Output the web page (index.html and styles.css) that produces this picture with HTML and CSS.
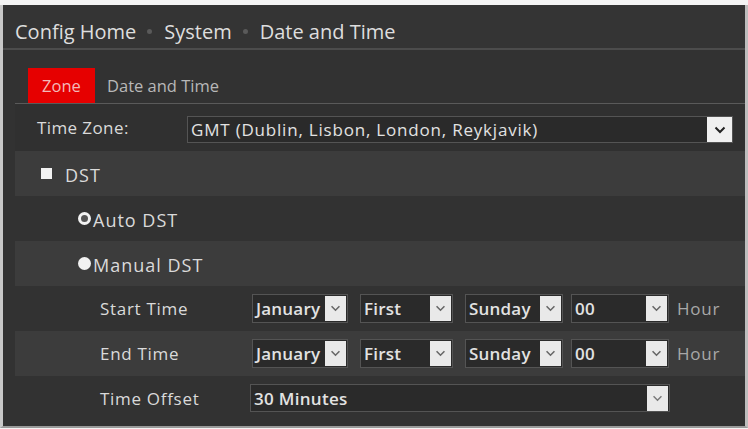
FILE: index.html
```html
<!DOCTYPE html>
<html>
<head>
<meta charset="utf-8">
<link rel="stylesheet" href="styles.css">
</head>
<body>
<div class="frame">
  <div class="header">
    <span>Config Home</span><span class="sep"></span><span>System</span><span class="sep"></span><span>Date and Time</span>
  </div>
  <div class="tabs">
    <div class="tab active">Zone</div>
    <div class="tab">Date and Time</div>
  </div>
  <div class="rows">
    <div class="row tz">
      <div class="label tzlabel">Time Zone:</div>
      <div class="select tzsel"><span class="val">GMT (Dublin, Lisbon, London, Reykjavik)</span><span class="btn"><svg viewBox="0 0 12 8" width="12" height="8"><path d="M1.5 1.5 L6 6 L10.5 1.5" fill="none" stroke="#222" stroke-width="2"/></svg></span></div>
    </div>
    <div class="row light dst">
      <span class="check"></span><span class="txt">DST</span>
    </div>
    <div class="row radio-row">
      <span class="radio on"></span><span class="txt">Auto DST</span>
    </div>
    <div class="row light radio-row">
      <span class="radio"></span><span class="txt">Manual DST</span>
    </div>
    <div class="row sub">
      <div class="label sublabel">Start Time</div>
      <div class="selgroup">
        <div class="select s-month"><span class="val">January</span><span class="btn sm"><svg viewBox="0 0 12 8" width="11" height="7"><path d="M1.5 1.5 L6 6 L10.5 1.5" fill="none" stroke="#666" stroke-width="1.8"/></svg></span></div>
        <div class="select s-week"><span class="val">First</span><span class="btn sm"><svg viewBox="0 0 12 8" width="11" height="7"><path d="M1.5 1.5 L6 6 L10.5 1.5" fill="none" stroke="#666" stroke-width="1.8"/></svg></span></div>
        <div class="select s-day"><span class="val">Sunday</span><span class="btn sm"><svg viewBox="0 0 12 8" width="11" height="7"><path d="M1.5 1.5 L6 6 L10.5 1.5" fill="none" stroke="#666" stroke-width="1.8"/></svg></span></div>
        <div class="select s-hour"><span class="val">00</span><span class="btn sm"><svg viewBox="0 0 12 8" width="11" height="7"><path d="M1.5 1.5 L6 6 L10.5 1.5" fill="none" stroke="#666" stroke-width="1.8"/></svg></span></div>
        <span class="unit">Hour</span>
      </div>
    </div>
    <div class="row light sub">
      <div class="label sublabel">End Time</div>
      <div class="selgroup">
        <div class="select s-month"><span class="val">January</span><span class="btn sm"><svg viewBox="0 0 12 8" width="11" height="7"><path d="M1.5 1.5 L6 6 L10.5 1.5" fill="none" stroke="#666" stroke-width="1.8"/></svg></span></div>
        <div class="select s-week"><span class="val">First</span><span class="btn sm"><svg viewBox="0 0 12 8" width="11" height="7"><path d="M1.5 1.5 L6 6 L10.5 1.5" fill="none" stroke="#666" stroke-width="1.8"/></svg></span></div>
        <div class="select s-day"><span class="val">Sunday</span><span class="btn sm"><svg viewBox="0 0 12 8" width="11" height="7"><path d="M1.5 1.5 L6 6 L10.5 1.5" fill="none" stroke="#666" stroke-width="1.8"/></svg></span></div>
        <div class="select s-hour"><span class="val">00</span><span class="btn sm"><svg viewBox="0 0 12 8" width="11" height="7"><path d="M1.5 1.5 L6 6 L10.5 1.5" fill="none" stroke="#666" stroke-width="1.8"/></svg></span></div>
        <span class="unit">Hour</span>
      </div>
    </div>
    <div class="row sub">
      <div class="label sublabel">Time Offset</div>
      <div class="select s-offset"><span class="val bold">30 Minutes</span><span class="btn sm"><svg viewBox="0 0 12 8" width="11" height="7"><path d="M1.5 1.5 L6 6 L10.5 1.5" fill="none" stroke="#777" stroke-width="1.6"/></svg></span></div>
    </div>
  </div>
</div>
</body>
</html>
```

FILE: styles.css
```css
html, body {
  margin: 0;
  padding: 0;
  background: #f4f4f4;
}
body {
  font-family: "Open Sans", "Noto Sans", sans-serif;
  color: #dcdcdc;
}
.frame {
  margin-top: 5px;
  height: 421px;
  background: #323232;
  border-left: 3px solid #c8c8c8;
  border-right: 3px solid #bdbdbd;
  border-bottom: 2px solid #9a9a9a;
  display: flex;
  flex-direction: column;
}
.header {
  height: 45px;
  flex: none;
  box-sizing: border-box;
  padding-top: 9px;
  display: flex;
  align-items: center;
  padding-left: 12px;
  font-size: 20px;
  color: #dedede;
  background: #343434;
  border-bottom: 2px solid #4c4c4c;
}
.sep {
  width: 5px;
  height: 5px;
  border-radius: 50%;
  background: #5a5a5a;
  margin: 0 12px 0 11px;
}
.tabs {
  height: 35px;
  flex: none;
  margin-top: 18px;
  margin-left: 12px;
  display: flex;
  align-items: stretch;
  border-bottom: 1px solid #5a5a5a;
}
.tab {
  display: flex;
  align-items: center;
  font-size: 16.5px;
  color: #b8b8b8;
  padding: 0 12px;
}
.tab.active {
  margin-left: 13px;
  width: 67px;
  box-sizing: border-box;
  justify-content: center;
  background: #e60000;
  color: #f3b9b9;
}
.rows {
  margin-left: 12px;
  display: flex;
  flex-direction: column;
}
.row {
  height: 45px;
  flex: none;
  display: flex;
  align-items: center;
  font-size: 17px;
  color: #dadada;
}
.row.light {
  background: #3c3c3c;
}
.row.tz {
  height: 47px;
  padding-left: 22px;
  background: #303030;
}
.label {
  flex: none;
}
.tzlabel {
  width: 150px;
  letter-spacing: 0.4px;
}
.select {
  display: flex;
  align-items: center;
  justify-content: space-between;
  box-sizing: border-box;
  border: 1px solid #545454;
  background: #2a2a2a;
  color: #e2e2e2;
}
.val {
  padding-left: 3px;
  white-space: nowrap;
}
.tzsel {
  width: 546px;
  height: 27px;
  margin-top: 4px;
  font-size: 17px;
  letter-spacing: 0.8px;
}
.btn {
  flex: none;
  width: 25px;
  height: 25px;
  background: #f0f0f0;
  display: flex;
  align-items: center;
  justify-content: center;
}
.btn.sm {
  width: 21px;
  height: 25px;
  background: #e9e9e9;
}
.dst {
  padding-left: 26px;
}
.txt {
  font-size: 18px;
  letter-spacing: 1px;
  padding-top: 3px;
}
.check {
  width: 11px;
  height: 11px;
  background: #f2f2f2;
  margin-right: 13px;
}
.radio-row {
  padding-left: 63px;
}
.radio {
  box-sizing: border-box;
  width: 13px;
  height: 13px;
  border-radius: 50%;
  background: #f2f2f2;
  margin-right: 2px;
}
.radio.on {
  border: 3px solid #f2f2f2;
  background: #555;
}
.sub {
  padding-left: 85px;
}
.sublabel {
  width: 150px;
  letter-spacing: 0.7px;
}
.selgroup {
  display: flex;
  align-items: center;
  margin-left: 2px;
}
.selgroup .select {
  height: 29px;
  font-size: 17px;
  font-weight: 600;
  letter-spacing: 0.2px;
  padding-right: 1px;
}
.s-month { width: 96px; margin-right: 12px; }
.s-week { width: 93px; margin-right: 12px; }
.s-day { width: 98px; margin-right: 8px; }
.s-hour { width: 98px; margin-right: 8px; }
.unit {
  color: #a8a8a8;
  font-size: 17px;
  letter-spacing: 0.8px;
}
.s-offset {
  width: 420px;
  height: 28px;
  font-size: 17px;
  padding-right: 1px;
  margin-top: -1px;
}
.bold {
  font-weight: 600;
  letter-spacing: 0.3px;
}
```
